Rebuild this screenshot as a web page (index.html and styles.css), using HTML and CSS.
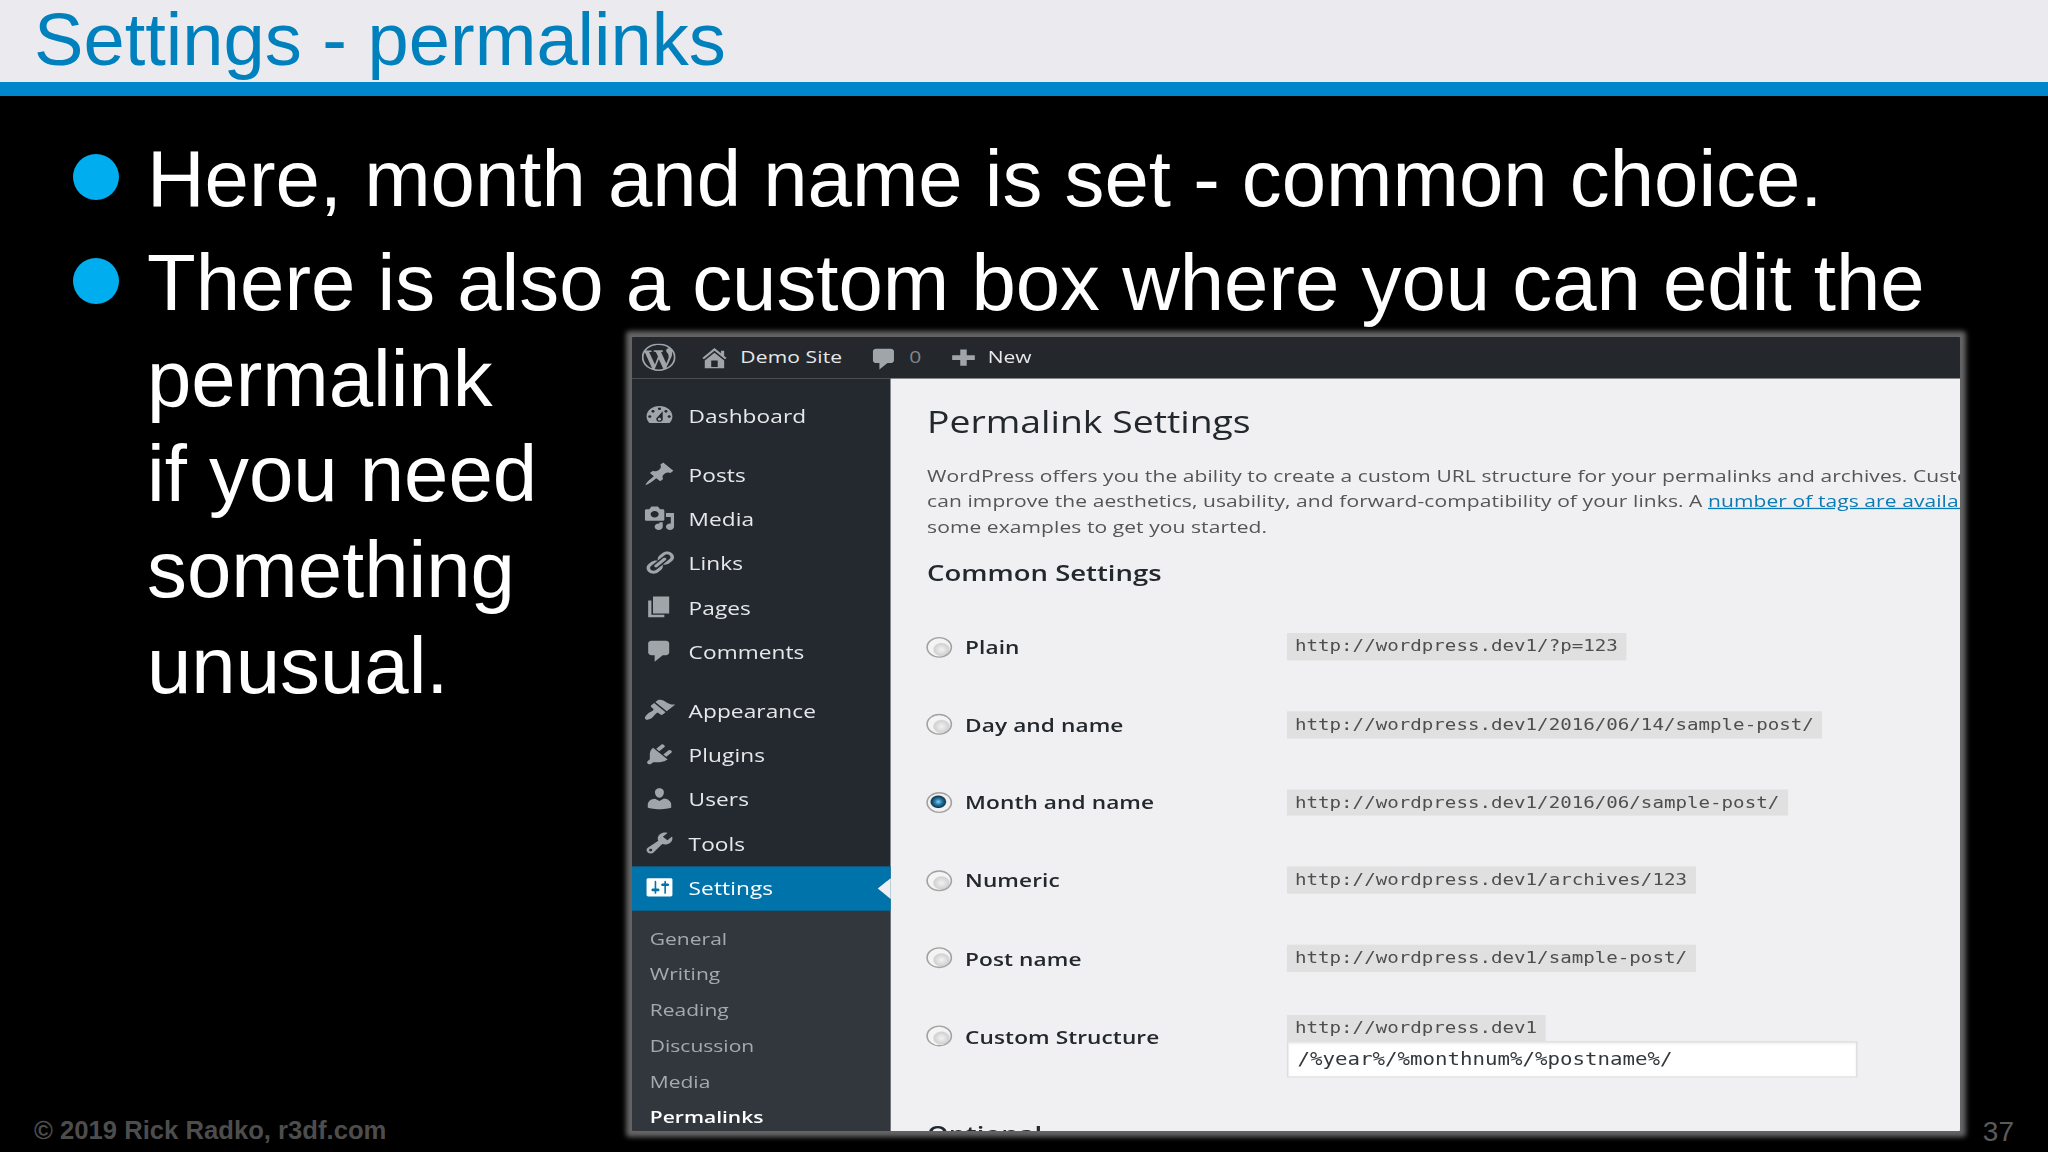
FILE: index.html
```html
<!DOCTYPE html>
<html lang="en">
<head>
    <meta charset="UTF-8">
    <meta name="viewport" content="width=device-width, initial-scale=1.0">
    <title>Settings - permalinks</title>
    <link rel="stylesheet" href="styles.css">
</head>
<body>
    <div class="slide">
        <header class="slide-header">
            <h1>Settings - permalinks</h1>
        </header>

        <ul class="bullets">
            <li>Here, month and name is set - common choice.</li>
            <li>There is also a custom box where you can edit the<br>permalink<br>if you need<br>something<br>unusual.</li>
        </ul>

        <footer class="slide-footer">
            <span class="copyright">© 2019 Rick Radko, r3df.com</span>
            <span class="page-number">37</span>
        </footer>

        <div class="shot">
            <div class="admin">
                <div class="adminbar">
                    <svg class="bar-logo" viewBox="0 0 20 20"><path d="M20 10c0-5.51-4.49-10-10-10C4.48 0 0 4.49 0 10c0 5.52 4.48 10 10 10 5.51 0 10-4.48 10-10zM7.78 15.37L4.37 6.22c.55-.02 1.17-.08 1.17-.08.5-.06.44-1.13-.06-1.11 0 0-1.45.11-2.37.11-.18 0-.37 0-.58-.01C4.12 2.69 6.87 1.11 10 1.11c2.33 0 4.45.87 6.05 2.34-.68-.11-1.65.39-1.65 1.58 0 .74.45 1.36.9 2.1.35.61.55 1.36.55 2.46 0 1.49-1.4 5-1.4 5l-3.03-8.37c.54-.02.82-.17.82-.17.5-.05.44-1.25-.06-1.22 0 0-1.44.12-2.38.12-.87 0-2.33-.12-2.33-.12-.5-.03-.56 1.2-.06 1.22l.92.08 1.26 3.41zM17.41 10c.24-.64.74-1.87.43-4.25.7 1.29 1.05 2.71 1.05 4.25 0 3.29-1.73 6.24-4.4 7.78.97-2.59 1.94-5.2 2.92-7.78zM6.1 18.09C3.12 16.65 1.11 13.53 1.11 10c0-1.3.23-2.48.72-3.59C3.25 10.3 4.67 14.2 6.1 18.09zm4.03-6.63l2.58 6.98c-.86.29-1.76.45-2.71.45-.79 0-1.57-.11-2.29-.33.81-2.38 1.62-4.74 2.42-7.1z"/></svg>
                    <div class="bar-item bar-site">
                        <svg viewBox="0 0 20 20"><path d="M16 8.5l1.53 1.53-1.06 1.06L10 4.6l-6.47 6.49-1.06-1.06L10 2.5l4 4v-2h2v4zm-6-2.46l6 5.99V18H4v-5.97zM12 17v-5H8v5h4z"/></svg>
                        <span>Demo Site</span>
                    </div>
                    <div class="bar-item bar-comments">
                        <svg viewBox="0 0 20 20"><path d="M5 2h9c1.1 0 2 .9 2 2v7c0 1.1-.9 2-2 2h-2l-5 5v-5H5c-1.1 0-2-.9-2-2V4c0-1.1.9-2 2-2z"/></svg>
                        <span>0</span>
                    </div>
                    <div class="bar-item bar-new">
                        <svg viewBox="0 0 20 20"><path d="M17 8v3.6h-5V16H8v-4.4H3V8h5V3.500h4V8z"/></svg>
                        <span>New</span>
                    </div>
                </div>

                <div class="admin-body">
                    <nav class="sidebar">
                        <a class="menu-item"><svg viewBox="0 0 20 20"><path d="M3.76 16h12.48c1.1-1.37 1.76-3.11 1.76-5 0-4.42-3.58-8-8-8s-8 3.58-8 8c0 1.89.66 3.63 1.76 5zM10 4c.55 0 1 .45 1 1s-.45 1-1 1-1-.45-1-1 .45-1 1-1zM6 6c.55 0 1 .45 1 1s-.45 1-1 1-1-.45-1-1 .45-1 1-1zm8 0c.55 0 1 .45 1 1s-.45 1-1 1-1-.45-1-1 .45-1 1-1zm-5.37 5.55L12 7v6c0 1.1-.9 2-2 2s-2-.9-2-2c0-.57.24-1.08.63-1.45zM4 10c.55 0 1 .45 1 1s-.45 1-1 1-1-.45-1-1 .45-1 1-1zm12 0c.55 0 1 .45 1 1s-.45 1-1 1-1-.45-1-1 .45-1 1-1zm-5 3c0-.55-.45-1-1-1s-1 .45-1 1 .45 1 1 1 1-.45 1-1z"/></svg>Dashboard</a>
                        <div class="separator"></div>
                        <a class="menu-item"><svg viewBox="0 0 20 20"><path d="M10.44 3.02l1.82-1.82 6.36 6.35-1.83 1.82c-1.05-.68-2.48-.57-3.41.36l-.75.75c-.92.93-1.04 2.35-.35 3.41l-1.83 1.82-2.41-2.41-2.8 2.79c-.42.42-3.38 2.71-3.8 2.29s1.86-3.39 2.28-3.81l2.79-2.79L4.1 9.36l1.83-1.82c1.05.69 2.48.57 3.4-.36l.75-.75c.93-.92 1.05-2.35.36-3.41z"/></svg>Posts</a>
                        <a class="menu-item"><svg viewBox="0 0 20 20"><path d="M13 11V4c0-.55-.45-1-1-1h-1.67L9 1H5L3.67 3H2c-.55 0-1 .45-1 1v7c0 .55.45 1 1 1h10c.55 0 1-.45 1-1zM7 4.5c1.38 0 2.5 1.12 2.5 2.5S8.38 9.5 7 9.5 4.5 8.38 4.5 7 5.62 4.5 7 4.5zM14 6h5v10.5c0 1.38-1.12 2.5-2.5 2.5S14 17.88 14 16.5s1.12-2.5 2.5-2.5c.17 0 .34.02.5.05V9h-3V6zm-4 8.05V13h2v3.5c0 1.38-1.12 2.5-2.5 2.5S7 17.88 7 16.5 8.12 14 9.5 14c.17 0 .34.02.5.05z"/></svg>Media</a>
                        <a class="menu-item"><svg viewBox="0 0 20 20"><path d="M17.74 2.76c1.68 1.69 1.68 4.41 0 6.1l-1.53 1.52c-1.12 1.12-2.7 1.47-4.14 1.09l2.62-2.61.76-.77.76-.76c.84-.84.84-2.2 0-3.04-.84-.85-2.2-.85-3.04 0l-.77.76-3.38 3.38c-.37-1.44-.02-3.02 1.1-4.14l1.52-1.53c1.69-1.68 4.42-1.68 6.1 0zM8.59 13.43l5.34-5.34c.42-.42.42-1.1 0-1.52-.44-.43-1.13-.39-1.53 0l-5.33 5.34c-.42.42-.42 1.1 0 1.52.44.43 1.13.39 1.52 0zm-.76 2.29l4.14-4.15c.38 1.44.03 3.02-1.09 4.14l-1.52 1.53c-1.69 1.68-4.41 1.68-6.1 0-1.68-1.68-1.68-4.42 0-6.1l1.53-1.52c1.12-1.12 2.7-1.47 4.14-1.1l-4.14 4.15c-.85.84-.85 2.2 0 3.05.84.84 2.2.84 3.04 0z"/></svg>Links</a>
                        <a class="menu-item"><svg viewBox="0 0 20 20"><path d="M6 15V2h10v13H6zm-1 1h8v2H3V5h2v11z"/></svg>Pages</a>
                        <a class="menu-item"><svg viewBox="0 0 20 20"><path d="M5 2h9c1.1 0 2 .9 2 2v7c0 1.1-.9 2-2 2h-2l-5 5v-5H5c-1.1 0-2-.9-2-2V4c0-1.1.9-2 2-2z"/></svg>Comments</a>
                        <div class="separator"></div>
                        <a class="menu-item"><svg viewBox="0 0 20 20"><path d="M14.48 11.06L7.41 3.99l1.5-1.5c.5-.56 2.3-.47 3.51.32 1.21.8 1.43 1.28 2.91 2.1 1.18.64 2.45 1.26 4.45.85zm-.71.71L6.7 4.7 4.93 6.47c-.39.39-.39 1.02 0 1.41l1.06 1.06c.39.39.39 1.03 0 1.42-.6.6-1.43 1.11-2.21 1.69-.35.26-.7.53-1.01.84C1.43 14.23.4 16.08 1.4 17.07c.99 1 2.84-.03 4.18-1.36.31-.31.58-.66.85-1.02.57-.78 1.08-1.61 1.69-2.21.39-.39 1.02-.39 1.41 0l1.06 1.06c.39.39 1.02.39 1.41 0z"/></svg>Appearance</a>
                        <a class="menu-item"><svg viewBox="0 0 20 20"><path d="M13.11 4.36L9.87 7.6 8 5.73l3.24-3.24c.35-.34 1.05-.2 1.56.32.52.51.66 1.21.31 1.55zm-8 1.77l.91-1.12 9.01 9.01-1.19.84c-.71.71-2.63 1.16-3.82 1.16H6.14L4.9 17.26c-.59.59-1.54.59-2.12 0-.59-.58-.59-1.53 0-2.12l1.24-1.24v-3.88c0-1.13.4-3.19 1.09-3.89zm7.26 3.97l3.24-3.24c.34-.35 1.04-.21 1.55.31.52.51.66 1.21.31 1.55l-3.24 3.25z"/></svg>Plugins</a>
                        <a class="menu-item"><svg viewBox="0 0 20 20"><path d="M10 9.25c-2.27 0-2.73-3.44-2.73-3.44C7 4.02 7.82 2 9.97 2c2.16 0 2.98 2.02 2.71 3.81 0 0-.41 3.44-2.68 3.44zm0 2.57L12.72 10c2.39 0 4.52 2.33 4.52 4.53v2.49s-3.65 1.13-7.24 1.13c-3.65 0-7.24-1.13-7.24-1.13v-2.49c0-2.25 1.94-4.48 4.47-4.48z"/></svg>Users</a>
                        <a class="menu-item"><svg viewBox="0 0 20 20"><path d="M16.68 9.77c-1.34 1.34-3.3 1.67-4.95.99l-5.41 6.52c-.99.99-2.59.99-3.58 0s-.99-2.59 0-3.57l6.52-5.42c-.68-1.65-.35-3.61.99-4.95 1.28-1.28 3.12-1.62 4.72-1.06l-2.89 2.89 2.82 2.82 2.86-2.87c.53 1.58.18 3.39-1.08 4.65zM3.81 16.21c.4.39 1.04.39 1.43 0 .4-.4.4-1.04 0-1.43-.39-.4-1.03-.4-1.43 0-.39.39-.39 1.03 0 1.43z"/></svg>Tools</a>
                        <a class="menu-item current"><svg viewBox="0 0 20 20"><path d="M18 16V4c0-.55-.45-1-1-1H3c-.55 0-1 .45-1 1v12c0 .55.45 1 1 1h14c.55 0 1-.45 1-1zM8 11h1c.55 0 1 .45 1 1s-.45 1-1 1H8v1.5c0 .28-.22.5-.5.5s-.5-.22-.5-.5V13H6c-.55 0-1-.45-1-1s.45-1 1-1h1V5.5c0-.28.22-.5.5-.5s.5.22.5.5V11zm5-2h-1c-.55 0-1-.45-1-1s.45-1 1-1h1V5.5c0-.28.22-.5.5-.5s.5.22.5.5V7h1c.55 0 1 .45 1 1s-.45 1-1 1h-1v5.5c0 .28-.22.5-.5.5s-.5-.22-.5-.5V9z"/></svg>Settings</a>
                        <div class="submenu">
                            <a>General</a>
                            <a>Writing</a>
                            <a>Reading</a>
                            <a>Discussion</a>
                            <a>Media</a>
                            <a class="active">Permalinks</a>
                        </div>
                    </nav>

                    <main class="content">
                        <h2 class="page-title">Permalink Settings</h2>
                        <p class="intro">WordPress offers you the ability to create a custom URL structure for your permalinks and archives. Custom<br>can improve the aesthetics, usability, and forward-compatibility of your links. A <a>number of tags are available</a><br>some examples to get you started.</p>
                        <h3 class="section-title">Common Settings</h3>
                        <div class="options">
                            <div class="option">
                                <span class="radio"></span>
                                <span class="label">Plain</span>
                                <code>http://wordpress.dev1/?p=123</code>
                            </div>
                            <div class="option">
                                <span class="radio"></span>
                                <span class="label">Day and name</span>
                                <code>http://wordpress.dev1/2016/06/14/sample-post/</code>
                            </div>
                            <div class="option">
                                <span class="radio checked"></span>
                                <span class="label">Month and name</span>
                                <code>http://wordpress.dev1/2016/06/sample-post/</code>
                            </div>
                            <div class="option">
                                <span class="radio"></span>
                                <span class="label">Numeric</span>
                                <code>http://wordpress.dev1/archives/123</code>
                            </div>
                            <div class="option">
                                <span class="radio"></span>
                                <span class="label">Post name</span>
                                <code>http://wordpress.dev1/sample-post/</code>
                            </div>
                            <div class="option">
                                <span class="radio"></span>
                                <span class="label">Custom Structure</span>
                                <div class="custom">
                                    <code>http://wordpress.dev1</code>
                                    <div class="text-field">/%year%/%monthnum%/%postname%/</div>
                                </div>
                            </div>
                        </div>
                        <h3 class="section-title optional">Optional</h3>
                    </main>
                </div>
            </div>
        </div>
    </div>
</body>
</html>
```

FILE: styles.css
```css
* {
    box-sizing: border-box;
}

body {
    margin: 0;
    background-color: #000;
    font-family: "Liberation Sans", Arial, sans-serif;
}

.slide {
    position: relative;
    display: flex;
    flex-direction: column;
    width: 2048px;
    height: 1152px;
    overflow: hidden;
    background-color: #000;
}

.slide-header {
    height: 96px;
    padding-left: 34px;
    background-color: #ebebef;
    border-bottom: 14px solid #0087cb;
}

.slide-header h1 {
    margin: 0;
    color: #0080bd;
    font-size: 74.1px;
    font-weight: 400;
    line-height: 80px;
}

.bullets {
    flex: 1;
    display: flex;
    flex-direction: column;
    gap: 8px;
    margin: 0;
    padding: 35px 0 0 73px;
    list-style: none;
    color: #fff;
    font-size: 79.75px;
    line-height: 95.8px;
    white-space: nowrap;
}

.bullets li {
    display: flex;
}

.bullets li::before {
    content: "";
    flex: none;
    width: 46px;
    height: 46px;
    margin: 23px 28px 0 0;
    border-radius: 50%;
    background-color: #00aeef;
}

.slide-footer {
    display: flex;
    justify-content: space-between;
    align-items: center;
    height: 44px;
    padding: 0 34px;
    color: #4d4d4d;
}

.copyright {
    font-size: 25.65px;
    font-weight: 700;
}

.page-number {
    padding-top: 3px;
    font-size: 28px;
    color: #5a5a5a;
}

/* Screenshot on top of the slide */
.shot {
    position: absolute;
    left: 632px;
    top: 337px;
    width: 1328px;
    height: 794px;
    overflow: hidden;
    background-color: #f0f0f2;
}

.slide::after {
    content: "";
    position: absolute;
    left: 632px;
    top: 337px;
    width: 1328px;
    height: 794px;
    border-radius: 1px;
    box-shadow: 0 0 5px 6px #656565;
}

/* The admin screen is drawn at its own size and stretched to the frame */
.admin {
    width: 822px;
    height: 609px;
    transform: scale(1.617, 1.304);
    transform-origin: 0 0;
    font-family: "Open Sans", sans-serif;
    font-size: 13px;
    color: #555;
}

.adminbar {
    display: flex;
    align-items: center;
    height: 32px;
    padding: 0 0 1px 6px;
    background-color: #24282d;
    color: #e6e8ea;
}

.adminbar svg {
    width: 20px;
    height: 20px;
    fill: #a0a5aa;
}

.adminbar .bar-logo {
    width: 21px;
    height: 21px;
}

.bar-item {
    display: flex;
    align-items: center;
    line-height: 31px;
}

.bar-site {
    margin-left: 14px;
    gap: 6px;
    letter-spacing: 0.08px;
}

.bar-comments {
    margin-left: 15.5px;
    gap: 6px;
}

.bar-comments svg {
    position: relative;
    top: 1px;
}

.bar-comments span {
    color: #82878c;
}

.bar-new {
    margin-left: 16px;
    gap: 5px;
}

.admin-body {
    display: flex;
    height: 577px;
}

.sidebar {
    flex: none;
    width: 160px;
    padding-top: 12px;
    background-color: #24282f;
}

.menu-item {
    position: relative;
    display: flex;
    align-items: center;
    gap: 8px;
    height: 34px;
    padding: 0 0 2px 7px;
    color: #e6e8ea;
    font-size: 14px;
    letter-spacing: 0.05px;
}

.menu-item svg {
    width: 20px;
    height: 20px;
    fill: #a0a5aa;
}

.menu-item.current {
    background-color: #0073aa;
    color: #fff;
}

.menu-item.current svg {
    fill: #fff;
}

.menu-item.current::after {
    content: "";
    position: absolute;
    right: 0;
    top: 9px;
    border: 8px solid transparent;
    border-left: 0;
    border-right-color: #f0f0f2;
}

.separator {
    height: 11px;
}

.submenu {
    display: flex;
    flex-direction: column;
    height: 200px;
    padding: 7.5px 0 0 11px;
    background-color: #32363d;
    color: #a6aab0;
    line-height: 27.6px;
}

.submenu .active {
    color: #fff;
    font-weight: 600;
}

.content {
    width: 662px;
    padding-left: 22.5px;
    background-color: #f0f0f2;
    white-space: nowrap;
}

.page-title {
    margin: 0;
    padding-top: 17px;
    color: #23282d;
    font-size: 23.1px;
    font-weight: 400;
    line-height: 32px;
}

.intro {
    margin: 15.5px 0 0;
    line-height: 19.6px;
    letter-spacing: 0.045px;
}

.intro a {
    color: #0a7bb5;
    text-decoration: underline;
}

.section-title {
    margin: 13.7px 0 0;
    color: #23282d;
    font-size: 17px;
    font-weight: 600;
    line-height: 24px;
}

.options {
    padding-top: 14.8px;
}

.option {
    display: grid;
    grid-template-columns: 23px 199px 1fr;
    grid-template-rows: 59.7px;
    align-items: center;
}

.label {
    padding-left: 0.5px;
    color: #23282d;
    font-size: 14px;
    font-weight: 600;
    letter-spacing: 0.05px;
}

.radio {
    width: 16px;
    height: 16px;
    margin-left: -1px;
    border: 1px solid #a2a2a2;
    border-radius: 50%;
    background: radial-gradient(circle at 60% 62%, #f2f2f2 0, #d2d2d2 4.5px, #f4f4f4 5.5px);
}

.radio.checked {
    background: radial-gradient(circle at 46% 46%, #8fd0ee 0, #2b83b4 2px, #12384f 4.4px, #f1f1f1 5.2px);
}

code {
    justify-self: start;
    display: inline-block;
    height: 20.5px;
    padding: 0 5.5px;
    background-color: #e0e0e1;
    color: #4e4e50;
    font-family: "DejaVu Sans Mono", monospace;
    font-size: 11.85px;
    line-height: 20.5px;
}

.custom {
    display: flex;
    flex-direction: column;
    align-items: flex-start;
    padding-top: 15.4px;
}

.text-field {
    width: 353px;
    height: 28px;
    padding-left: 6px;
    border: 1px solid #ddd;
    background-color: #fff;
    box-shadow: inset 0 1px 2px rgba(0, 0, 0, 0.07);
    color: #32373c;
    font-family: "DejaVu Sans Mono", monospace;
    font-size: 12.85px;
    line-height: 26px;
}

.optional {
    margin-top: 33px;
}
```
